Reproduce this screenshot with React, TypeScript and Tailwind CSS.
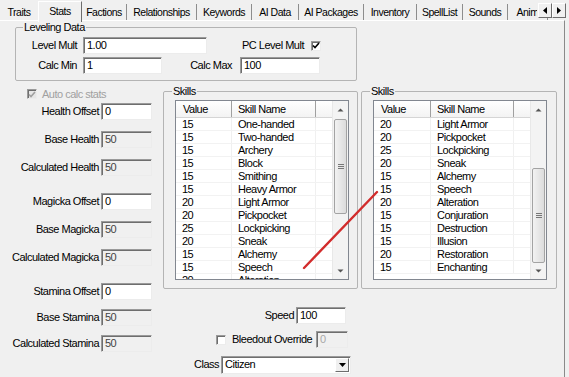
import React from "react";

const listA: [string, string][] = [
  ["15", "One-handed"],
  ["15", "Two-handed"],
  ["15", "Archery"],
  ["15", "Block"],
  ["15", "Smithing"],
  ["15", "Heavy Armor"],
  ["20", "Light Armor"],
  ["20", "Pickpocket"],
  ["25", "Lockpicking"],
  ["20", "Sneak"],
  ["15", "Alchemy"],
  ["15", "Speech"],
  ["20", "Alteration"],
];

const listB: [string, string][] = [
  ["20", "Light Armor"],
  ["20", "Pickpocket"],
  ["25", "Lockpicking"],
  ["20", "Sneak"],
  ["15", "Alchemy"],
  ["15", "Speech"],
  ["20", "Alteration"],
  ["15", "Conjuration"],
  ["15", "Destruction"],
  ["15", "Illusion"],
  ["20", "Restoration"],
  ["15", "Enchanting"],
];

const tabs: [string, string][] = [
  ["Traits", "w-[38px]"],
  ["Stats", "w-[44px]"],
  ["Factions", "w-[45px]"],
  ["Relationships", "w-[70px]"],
  ["Keywords", "w-[55px]"],
  ["AI Data", "w-[47px]"],
  ["AI Packages", "w-[65px]"],
  ["Inventory", "w-[53px]"],
  ["SpellList", "w-[46px]"],
  ["Sounds", "w-[45px]"],
  ["Anim", "w-[40px]"],
];

const sunken =
  "border border-t-[#9a9a9a] border-l-[#9a9a9a] border-r-[#ececec] border-b-[#ececec] shadow-[inset_1px_1px_0_#6e6e6e]";

function Box({ w, value, disabled }: { w: string; value: string; disabled?: boolean }) {
  return (
    <div
      className={`${w} h-[17px] ${sunken} ${disabled ? "bg-[#f0f0f0] text-[#444]" : "bg-white text-black"} pl-[3px] leading-[15px] overflow-hidden whitespace-nowrap`}
    >
      {value}
    </div>
  );
}

function Check({ checked, disabled }: { checked?: boolean; disabled?: boolean }) {
  return (
    <div
      className={`w-[10px] h-[10px] ${sunken} ${disabled ? "bg-[#e6e6e6]" : "bg-white"} flex items-center justify-center`}
    >
      {checked && (
        <svg width="8" height="7" viewBox="0 0 8 7">
          <path
            d="M1 3.5 L3 5.5 L7 1"
            fill="none"
            stroke={disabled ? "#a0a0a0" : "#000"}
            strokeWidth="1.6"
          />
        </svg>
      )}
    </div>
  );
}

function StatRow({ label, value, disabled, mt }: { label: string; value: string; disabled?: boolean; mt: string }) {
  return (
    <div className={`flex items-center h-[17px] ${mt}`}>
      <div className="w-[101px] pr-[2px] text-right whitespace-nowrap">{label}</div>
      <Box w="w-[51px]" value={value} disabled={disabled} />
    </div>
  );
}

function ScrollBar({ thumbTop, thumbH }: { thumbTop: string; thumbH: string }) {
  return (
    <div className="w-[16px] h-full flex flex-col bg-[#f3f3f3] border-l border-[#e8e8e8]">
      <div className="h-[17px] flex items-center justify-center">
        <svg width="7" height="4" viewBox="0 0 7 4">
          <path d="M0.5 3.5 L3.5 0.5 L6.5 3.5 Z" fill="#555" />
        </svg>
      </div>
      <div className="flex-1 relative">
        <div
          className={`absolute left-[1px] right-[1px] ${thumbTop} ${thumbH} rounded-[2px] border border-[#a3a3a3] bg-gradient-to-r from-[#f2f2f2] to-[#dcdcdc] flex items-center justify-center`}
        >
          <div className="flex flex-col gap-[1px]">
            <div className="w-[6px] h-[1px] bg-[#777]" />
            <div className="w-[6px] h-[1px] bg-[#777]" />
            <div className="w-[6px] h-[1px] bg-[#777]" />
          </div>
        </div>
      </div>
      <div className="h-[17px] flex items-center justify-center">
        <svg width="7" height="4" viewBox="0 0 7 4">
          <path d="M0.5 0.5 L3.5 3.5 L6.5 0.5 Z" fill="#555" />
        </svg>
      </div>
    </div>
  );
}

function SkillList({
  rows,
  col1,
  col2,
  thumbTop,
  thumbH,
}: {
  rows: [string, string][];
  col1: string;
  col2: string;
  thumbTop: string;
  thumbH: string;
}) {
  return (
    <div className="ml-[11px] mt-[2px] w-[174px] h-[180px] border border-[#828790] bg-white flex overflow-hidden">
      <div className="flex-1 flex flex-col overflow-hidden">
        <div className="h-[17px] shrink-0 flex bg-gradient-to-b from-white to-[#f3f3f3] border-b border-[#d5d5d5] leading-[16px]">
          <div className={`${col1} pl-[7px] border-r border-[#a0a0a0]`}>Value</div>
          <div className={`${col2} pl-[6px] border-r border-[#a0a0a0]`}>Skill Name</div>
          <div className="flex-1" />
        </div>
        {rows.map(([v, n]) => (
          <div key={n} className="h-[13px] shrink-0 flex leading-[13px] border-b border-[#f2f2f2]">
            <div className={`${col1} pl-[6px] border-r border-[#f0f0f0]`}>{v}</div>
            <div className={`${col2} pl-[6px] border-r border-[#f0f0f0]`}>{n}</div>
            <div className="flex-1" />
          </div>
        ))}
      </div>
      <ScrollBar thumbTop={thumbTop} thumbH={thumbH} />
    </div>
  );
}

export default function App() {
  return (
    <div className="relative w-[569px] h-[377px] overflow-hidden bg-[#f0f0f0] text-[11px] tracking-[-0.5px] text-black font-['Liberation_Sans',Arial,sans-serif]">
      {/* tab strip */}
      <div className="relative h-[20px] flex text-[10.5px]">
        {tabs.map(([t, w], i) =>
          t === "Stats" ? (
            <div
              key={t}
              className={`${w} h-[21px] mt-[1px] pt-[2px] leading-[14px] text-center bg-[#f0f0f0] border-l border-t border-white border-r border-r-[#6d6d6d] z-10`}
            >
              {t}
            </div>
          ) : (
            <div
              key={t}
              className={`${w} shrink-0 mt-[4px] h-[16px] leading-[16px] text-center whitespace-nowrap overflow-hidden ${i === 0 ? "" : "border-r border-[#8d8d8d]"}`}
            >
              {t}
            </div>
          )
        )}
        <div className="absolute right-[3px] top-[3px] flex bg-[#f0f0f0] pl-[1px]">
          <div className="w-[14px] h-[15px] border border-t-white border-l-white border-r-[#6d6d6d] border-b-[#6d6d6d] flex items-center justify-center">
            <svg width="4" height="7" viewBox="0 0 4 7">
              <path d="M4 0 L0 3.5 L4 7 Z" fill="#000" />
            </svg>
          </div>
          <div className="w-[14px] h-[15px] border border-t-white border-l-white border-r-[#6d6d6d] border-b-[#6d6d6d] flex items-center justify-center">
            <svg width="4" height="7" viewBox="0 0 4 7">
              <path d="M0 0 L4 3.5 L0 7 Z" fill="#000" />
            </svg>
          </div>
        </div>
      </div>

      {/* tab page */}
      <div className="w-[565px] h-[357px] border-t border-white border-r border-r-[#8a8a8a] flex flex-col">
        <fieldset className="ml-[15px] w-[342px] h-[61px] -mt-px border border-[#b4b4b4] rounded-[2px]">
          <legend className="ml-[7px] px-[1px] leading-[14px]">Leveling Data</legend>
          <div className="pt-[3px] flex flex-col gap-[3px]">
            <div className="flex items-center h-[17px]">
              <div className="w-[61px] text-right">Level Mult</div>
              <div className="w-[6px]" />
              <Box w="w-[124px]" value="1.00" />
              <div className="w-[35px]" />
              <div className="w-[69px] whitespace-nowrap">PC Level Mult</div>
              <Check checked />
            </div>
            <div className="flex items-center h-[17px]">
              <div className="w-[61px] text-right">Calc Min</div>
              <div className="w-[6px]" />
              <Box w="w-[79px]" value="1" />
              <div className="w-[70px] text-right">Calc Max</div>
              <div className="w-[8px]" />
              <Box w="w-[80px]" value="100" />
            </div>
          </div>
        </fieldset>

        <div className="flex mt-[3px]">
          {/* stats column */}
          <div className="w-[163px] flex flex-col">
            <div className="mt-[5px] h-[10px] flex items-center">
              <div className="ml-[27px]">
                <Check checked disabled />
              </div>
              <div className="ml-[5px] text-[#a0a0a0] whitespace-nowrap">Auto calc stats</div>
            </div>
            <StatRow label="Health Offset" value="0" mt="mt-[4px]" />
            <StatRow label="Base Health" value="50" disabled mt="mt-[11px]" />
            <StatRow label="Calculated Health" value="50" disabled mt="mt-[11px]" />
            <StatRow label="Magicka Offset" value="0" mt="mt-[17px]" />
            <StatRow label="Base Magicka" value="50" disabled mt="mt-[11px]" />
            <StatRow label="Calculated Magicka" value="50" disabled mt="mt-[11px]" />
            <StatRow label="Stamina Offset" value="0" mt="mt-[17px]" />
            <StatRow label="Base Stamina" value="50" disabled mt="mt-[9px]" />
            <StatRow label="Calculated Stamina" value="50" disabled mt="mt-[9px]" />
          </div>

          {/* skills + misc */}
          <div className="w-[194px] flex flex-col">
            <fieldset className="w-[195px] h-[205px] border border-[#b4b4b4] rounded-[2px]">
              <legend className="ml-[8px] px-[1px] leading-[14px]">Skills</legend>
              <SkillList rows={listA} col1="w-[56px]" col2="w-[84px]" thumbTop="top-[1px]" thumbH="h-[95px]" />
            </fieldset>
            <div className="mt-[18px] flex items-center h-[17px]">
              <div className="w-[133px] pr-[2px] text-right">Speed</div>
              <Box w="w-[50px]" value="100" />
            </div>
            <div className="mt-[7px] flex items-center h-[17px]">
              <div className="ml-[53px]">
                <Check />
              </div>
              <div className="ml-[6px] w-[84px] whitespace-nowrap">Bleedout Override</div>
              <div className={`w-[32px] h-[17px] ${sunken} bg-[#f0f0f0] text-[#a8a8a8] pl-[3px] leading-[15px]`}>0</div>
            </div>
            <div className="mt-[8px] flex items-center h-[17px]">
              <div className="ml-[31px] w-[27px]">Class</div>
              <div className={`w-[130px] h-[18px] ${sunken} bg-white flex items-center`}>
                <div className="flex-1 pl-[3px] leading-[15px]">Citizen</div>
                <div className="w-[14px] h-[14px] mr-[1px] border border-t-white border-l-white border-r-[#6d6d6d] border-b-[#6d6d6d] bg-[#f0f0f0] flex items-center justify-center">
                  <svg width="7" height="4" viewBox="0 0 7 4">
                    <path d="M0 0 L7 0 L3.5 4 Z" fill="#000" />
                  </svg>
                </div>
              </div>
            </div>
          </div>

          {/* second skills list */}
          <div className="ml-[4px]">
            <fieldset className="w-[196px] h-[205px] border border-[#b4b4b4] rounded-[2px]">
              <legend className="ml-[8px] px-[1px] leading-[14px]">Skills</legend>
              <SkillList rows={listB} col1="w-[57px]" col2="w-[83px]" thumbTop="top-[50px]" thumbH="h-[95px]" />
            </fieldset>
          </div>
        </div>
      </div>

      {/* red annotation line */}
      <svg className="absolute inset-0 pointer-events-none" width="569" height="377">
        <line x1="304" y1="268" x2="377" y2="192" stroke="#d22c2c" strokeWidth="2.4" strokeLinecap="round" />
      </svg>
    </div>
  );
}
